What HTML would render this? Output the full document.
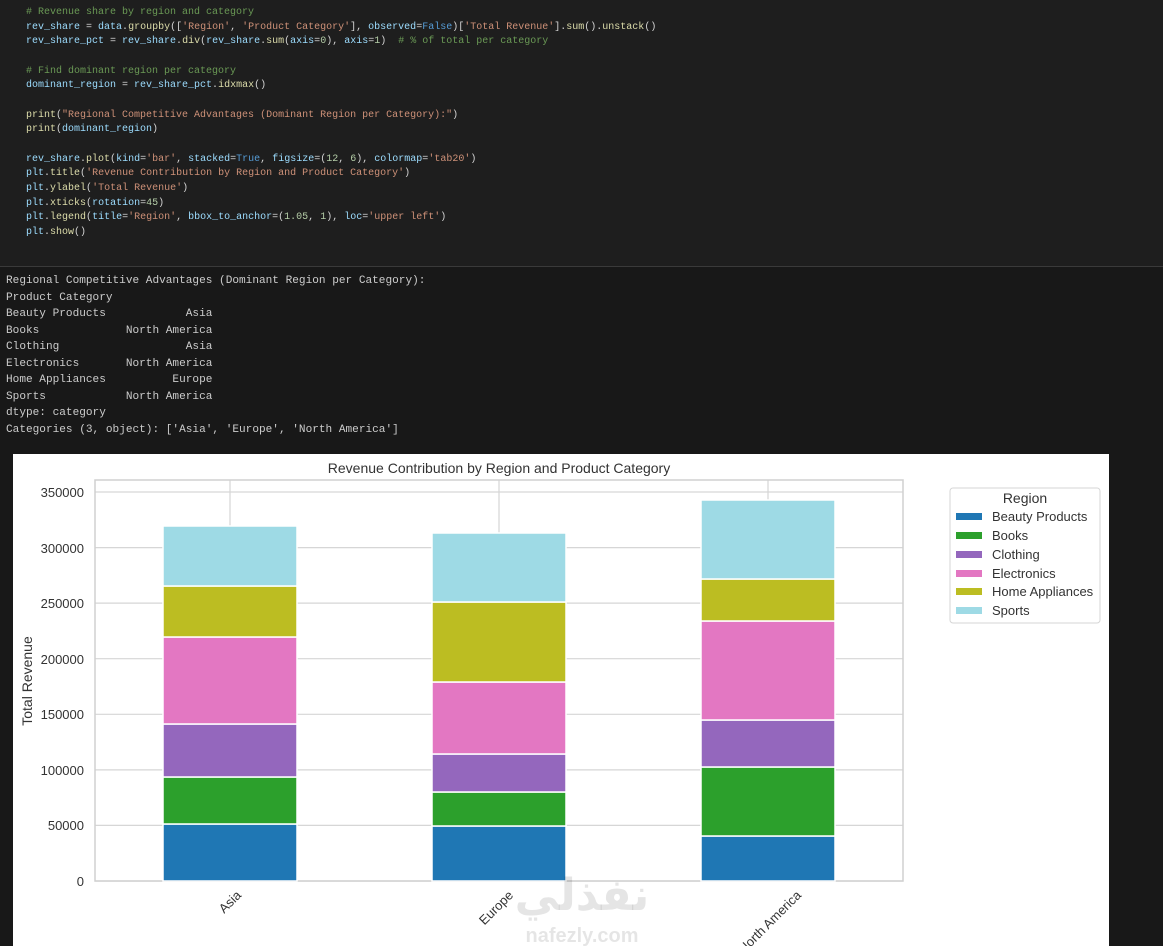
<!DOCTYPE html>
<html><head><meta charset="utf-8"><style>
body{margin:0;width:1163px;height:946px;overflow:hidden;background:#1e1e1e;font-family:"Liberation Mono",monospace;position:relative}
.code{position:absolute;left:26px;top:6px;font-size:10px;line-height:14.65px;color:#d4d4d4;white-space:pre}
.c{color:#6a9955}.s{color:#ce9178}.v{color:#9cdcfe}.f{color:#dcdcaa}.k{color:#569cd6}.n{color:#b5cea8}
.sep{position:absolute;left:0;top:266px;width:1163px;height:1px;background:#3a3a3a}
.out{position:absolute;left:0;top:267px;width:1163px;height:679px;background:#181818}
.otext{position:absolute;left:6px;top:273px;font-size:11.1px;line-height:16.5px;color:#cccccc;white-space:pre}
svg{position:absolute;left:0;top:0}
</style></head><body>
<div class="code"><span class="c"># Revenue share by region and category</span>
<span class="v">rev_share</span> = <span class="v">data</span>.<span class="f">groupby</span>([<span class="s">'Region'</span>, <span class="s">'Product Category'</span>], <span class="v">observed</span>=<span class="k">False</span>)[<span class="s">'Total Revenue'</span>].<span class="f">sum</span>().<span class="f">unstack</span>()
<span class="v">rev_share_pct</span> = <span class="v">rev_share</span>.<span class="f">div</span>(<span class="v">rev_share</span>.<span class="f">sum</span>(<span class="v">axis</span>=<span class="n">0</span>), <span class="v">axis</span>=<span class="n">1</span>)  <span class="c"># % of total per category</span>

<span class="c"># Find dominant region per category</span>
<span class="v">dominant_region</span> = <span class="v">rev_share_pct</span>.<span class="f">idxmax</span>()

<span class="f">print</span>(<span class="s">"Regional Competitive Advantages (Dominant Region per Category):"</span>)
<span class="f">print</span>(<span class="v">dominant_region</span>)

<span class="v">rev_share</span>.<span class="f">plot</span>(<span class="v">kind</span>=<span class="s">'bar'</span>, <span class="v">stacked</span>=<span class="k">True</span>, <span class="v">figsize</span>=(<span class="n">12</span>, <span class="n">6</span>), <span class="v">colormap</span>=<span class="s">'tab20'</span>)
<span class="v">plt</span>.<span class="f">title</span>(<span class="s">'Revenue Contribution by Region and Product Category'</span>)
<span class="v">plt</span>.<span class="f">ylabel</span>(<span class="s">'Total Revenue'</span>)
<span class="v">plt</span>.<span class="f">xticks</span>(<span class="v">rotation</span>=<span class="n">45</span>)
<span class="v">plt</span>.<span class="f">legend</span>(<span class="v">title</span>=<span class="s">'Region'</span>, <span class="v">bbox_to_anchor</span>=(<span class="n">1.05</span>, <span class="n">1</span>), <span class="v">loc</span>=<span class="s">'upper left'</span>)
<span class="v">plt</span>.<span class="f">show</span>()</div>
<div class="sep"></div>
<div class="out"></div>
<div class="otext">Regional Competitive Advantages (Dominant Region per Category):
Product Category
Beauty Products            Asia
Books             North America
Clothing                   Asia
Electronics       North America
Home Appliances          Europe
Sports            North America
dtype: category
Categories (3, object): ['Asia', 'Europe', 'North America']</div>
<svg width="1163" height="946" font-family="Liberation Sans, sans-serif">
<rect x="13" y="454" width="1096" height="492" fill="#fff"/>
<g stroke="#d6d6d6" stroke-width="1.2">
<line x1="95" y1="881" x2="903" y2="881"/><line x1="95" y1="825.4" x2="903" y2="825.4"/><line x1="95" y1="769.9" x2="903" y2="769.9"/><line x1="95" y1="714.3" x2="903" y2="714.3"/><line x1="95" y1="658.7" x2="903" y2="658.7"/><line x1="95" y1="603.1" x2="903" y2="603.1"/><line x1="95" y1="547.6" x2="903" y2="547.6"/><line x1="95" y1="492" x2="903" y2="492"/>
<line x1="230" y1="480" x2="230" y2="881"/><line x1="499" y1="480" x2="499" y2="881"/><line x1="768" y1="480" x2="768" y2="881"/>
</g>
<rect x="95" y="480" width="808" height="401" fill="none" stroke="#d0d0d0" stroke-width="1.5"/>
<g stroke="#fff" stroke-width="1.5">
<rect x="163" y="824" width="134" height="57" fill="#1f77b4"/>
<rect x="163" y="777" width="134" height="47" fill="#2ca02c"/>
<rect x="163" y="724" width="134" height="53" fill="#9467bd"/>
<rect x="163" y="637" width="134" height="87" fill="#e377c2"/>
<rect x="163" y="586" width="134" height="51" fill="#bcbd22"/>
<rect x="163" y="526" width="134" height="60" fill="#9edae5"/>
<rect x="432" y="826" width="134" height="55" fill="#1f77b4"/>
<rect x="432" y="792" width="134" height="34" fill="#2ca02c"/>
<rect x="432" y="754" width="134" height="38" fill="#9467bd"/>
<rect x="432" y="682" width="134" height="72" fill="#e377c2"/>
<rect x="432" y="602" width="134" height="80" fill="#bcbd22"/>
<rect x="432" y="533" width="134" height="69" fill="#9edae5"/>
<rect x="701" y="836" width="134" height="45" fill="#1f77b4"/>
<rect x="701" y="767" width="134" height="69" fill="#2ca02c"/>
<rect x="701" y="720" width="134" height="47" fill="#9467bd"/>
<rect x="701" y="621" width="134" height="99" fill="#e377c2"/>
<rect x="701" y="579" width="134" height="42" fill="#bcbd22"/>
<rect x="701" y="500" width="134" height="79" fill="#9edae5"/>
</g>
<g font-size="13" fill="#333" text-anchor="end">
<text x="84" y="886">0</text><text x="84" y="830">50000</text><text x="84" y="775">100000</text><text x="84" y="719">150000</text><text x="84" y="664">200000</text><text x="84" y="608">250000</text><text x="84" y="553">300000</text><text x="84" y="497">350000</text>
<text transform="translate(242,896) rotate(-45)" font-size="13">Asia</text>
<text transform="translate(514,896) rotate(-45)" font-size="13">Europe</text>
<text transform="translate(802,896) rotate(-45)" font-size="13">North America</text>
</g>
<text x="499" y="473" font-size="14" fill="#333" text-anchor="middle">Revenue Contribution by Region and Product Category</text>
<text transform="translate(32,681) rotate(-90)" font-size="14" fill="#333" text-anchor="middle">Total Revenue</text>
<rect x="950" y="488" width="150" height="135" rx="3" fill="#fff" stroke="#d6d6d6"/>
<text x="1025" y="503" font-size="14" fill="#333" text-anchor="middle">Region</text>
<g font-size="13" fill="#333">
<rect x="956" y="513" width="26" height="7" fill="#1f77b4"/><text x="992" y="521">Beauty Products</text>
<rect x="956" y="532" width="26" height="7" fill="#2ca02c"/><text x="992" y="540">Books</text>
<rect x="956" y="551" width="26" height="7" fill="#9467bd"/><text x="992" y="559">Clothing</text>
<rect x="956" y="570" width="26" height="7" fill="#e377c2"/><text x="992" y="578">Electronics</text>
<rect x="956" y="588" width="26" height="7" fill="#bcbd22"/><text x="992" y="596">Home Appliances</text>
<rect x="956" y="607" width="26" height="7" fill="#9edae5"/><text x="992" y="615">Sports</text>
</g>
<g fill="#000" fill-opacity="0.1" font-weight="bold">
<text x="582" y="910" font-size="44" text-anchor="middle" font-family="DejaVu Sans, sans-serif">نفذلي</text>
<text x="582" y="942" font-size="20" text-anchor="middle">nafezly.com</text>
</g>
</svg>
</body></html>
